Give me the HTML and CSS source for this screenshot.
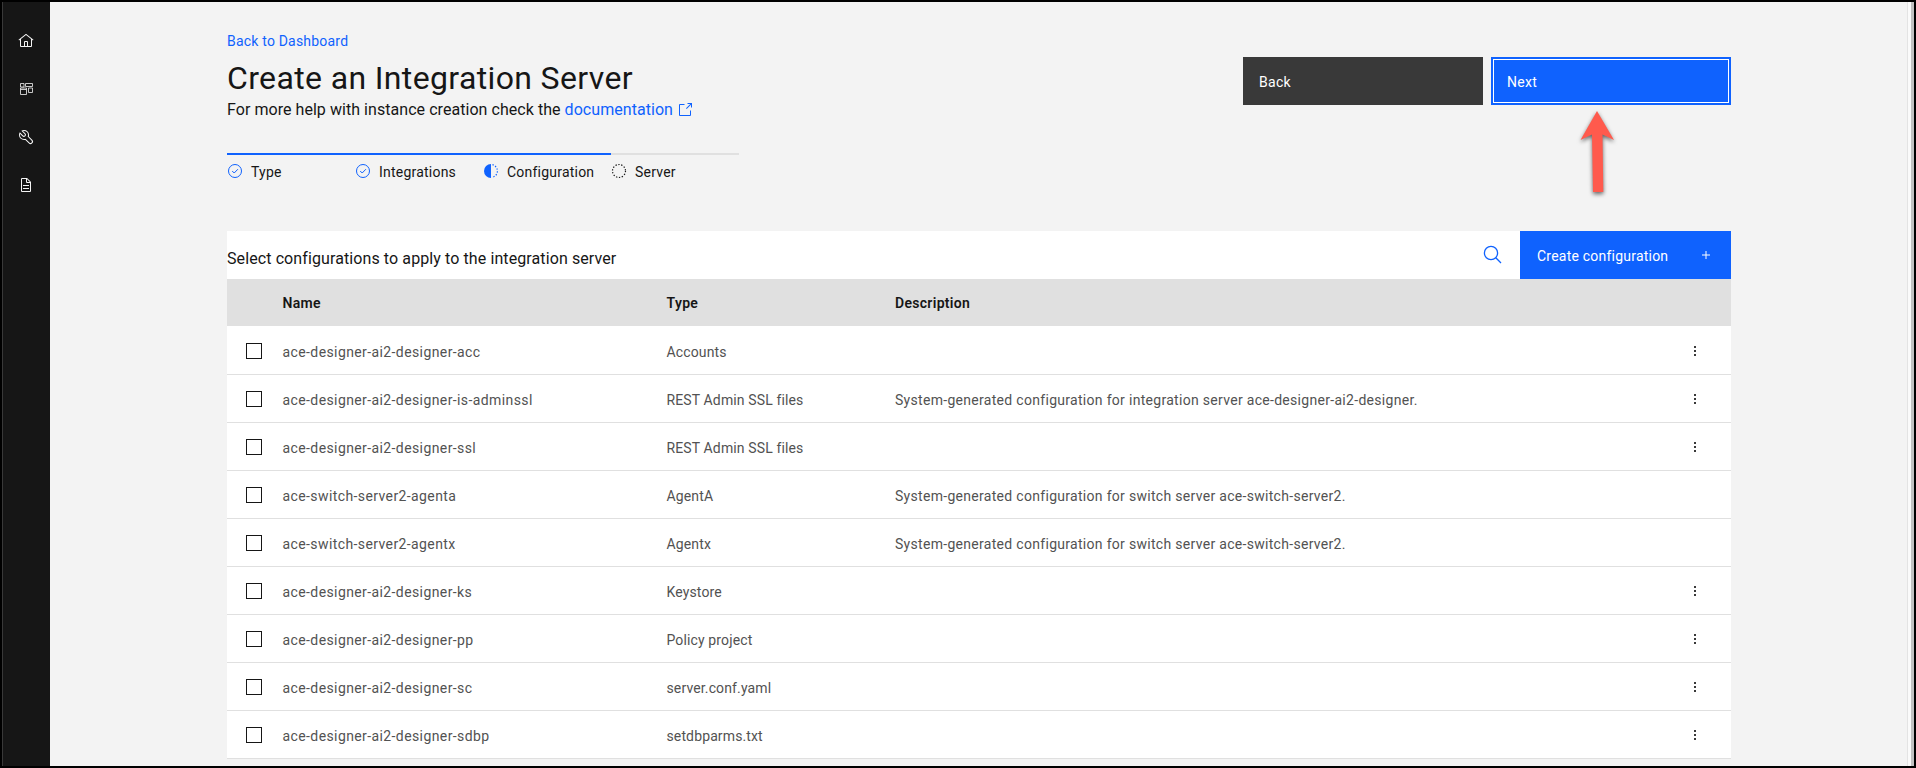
FILE: index.html
```
<!DOCTYPE html>
<html lang="en">
<head>
<meta charset="utf-8">
<title>Create an Integration Server</title>
<link rel="stylesheet" href="styles.css">
</head>
<body>
<div class="frame">
  <nav class="rail">
    <svg class="rail-icon" viewBox="0 0 32 32"><path d="M16.6 2.2a1 1 0 0 0-1.2 0L1 13.4 2.2 15 4 13.6V26a2 2 0 0 0 2 2h20a2 2 0 0 0 2-2V13.6l1.8 1.4 1.2-1.6ZM18 26h-4v-8h4Zm2 0v-8a2 2 0 0 0-2-2h-4a2 2 0 0 0-2 2v8H6V12l10-7.8L26 12v14Z"/></svg>
    <svg class="rail-icon" viewBox="0 0 32 32"><path class="line" d="M5 5h7v7H5zM15 5h14v6H15zM5 14h12v13H5zM21 14h8v9h-8zM5 17h12"/></svg>
    <svg class="rail-icon" viewBox="0 0 32 32"><path d="M12.100 2a9.800 9.800 0 0 0-5.400 1.600l6.400 6.400a2.100 2.100 0 0 1 .2 3 2.100 2.100 0 0 1-3-.2L3.700 6.400A9.840 9.840 0 0 0 2 12.100 10.140 10.140 0 0 0 12.100 22.200a10.900 10.900 0 0 0 2.600-.3l6.700 6.700a5 5 0 0 0 7.100-7.100l-6.700-6.700a10.900 10.900 0 0 0 .3-2.600A10 10 0 0 0 12.100 2ZM20 12.100a7.610 7.610 0 0 1-.3 2.100l-.3 1.100.8.8 6.700 6.700a2.880 2.880 0 0 1 .9 2.100A2.720 2.720 0 0 1 27 27a2.900 2.900 0 0 1-4.200 0l-6.700-6.700-.8-.8-1.100.3a7.610 7.610 0 0 1-2.100.3 8.270 8.270 0 0 1-5.700-2.300A7.630 7.630 0 0 1 4 12.100a8.330 8.330 0 0 1 .3-2.200l4.400 4.400a4.140 4.140 0 0 0 5.900.2 4.140 4.140 0 0 0-.2-5.900L10 4.200a6.450 6.450 0 0 1 2-.3 8.270 8.270 0 0 1 5.700 2.300A8.490 8.490 0 0 1 20 12.100Z"/></svg>
    <svg class="rail-icon" viewBox="0 0 32 32"><path d="M25.700 9.300l-7-7A1 1 0 0 0 18 2H8a2 2 0 0 0-2 2v24a2 2 0 0 0 2 2h16a2 2 0 0 0 2-2V10a1 1 0 0 0-.3-.7ZM18 4.400 23.600 10H18ZM24 28H8V4h8v6a2 2 0 0 0 2 2h6ZM10 22h12v2H10zM10 16h12v2H10z"/></svg>
  </nav>
  <main class="page">
    <header class="head">
      <div class="head-text">
        <a class="crumb">Back to Dashboard</a>
        <h1 class="title">Create an Integration Server</h1>
        <p class="help"><span>For more help with instance creation check the</span><a class="doc">documentation</a><svg class="launch" viewBox="0 0 32 32"><path d="M26 28H6a2 2 0 0 1-2-2V6a2 2 0 0 1 2-2h9v2H6v20h20v-9h2v9a2 2 0 0 1-2 2ZM21 2v2h5.600L18 12.600 19.400 14 28 5.400V11h2V2Z"/></svg></p>
      </div>
      <div class="actions">
        <button class="btn btn-back">Back</button>
        <button class="btn btn-next">Next</button>
        <svg class="pointer" viewBox="0 0 46 94"><path d="M22 5 39 34 27.500 28.500 28.300 86H18L17 28.500 5.500 34Z"/></svg>
      </div>
    </header>
    <ol class="steps">
      <li class="step done"><svg class="mark" viewBox="0 0 16 16"><circle cx="8" cy="8" r="6.500"/><path d="M5.200 8 7.200 10 10.900 6.200"/></svg><span>Type</span></li>
      <li class="step done"><svg class="mark" viewBox="0 0 16 16"><circle cx="8" cy="8" r="6.500"/><path d="M5.200 8 7.200 10 10.900 6.200"/></svg><span>Integrations</span></li>
      <li class="step done"><svg class="mark" viewBox="0 0 16 16"><path class="solid" d="M8 1a7 7 0 0 0 0 14Z"/><path class="dots" d="M9.500 1.700a6.500 6.500 0 0 1 0 12.600"/></svg><span>Configuration</span></li>
      <li class="step"><svg class="mark" viewBox="0 0 16 16"><circle class="dots" cx="8" cy="8" r="6.500"/></svg><span>Server</span></li>
    </ol>
    <section class="panel">
      <div class="toolbar">
        <p class="caption">Select configurations to apply to the integration server</p>
        <svg class="search" viewBox="0 0 20 20"><circle cx="8" cy="8" r="6.600"/><path d="m12.800 12.800 5.200 5.200"/></svg>
        <button class="create"><span>Create configuration</span><svg class="plus" viewBox="0 0 8 8"><path d="M4 0v8M0 4h8"/></svg></button>
      </div>
      <div class="row row-head"><span></span><span>Name</span><span>Type</span><span>Description</span><span></span></div>
      <div class="row"><i class="box"></i><span class="name">ace-designer-ai2-designer-acc</span><span class="type">Accounts</span><span></span><i class="kebab"></i></div>
      <div class="row"><i class="box"></i><span class="name">ace-designer-ai2-designer-is-adminssl</span><span class="type">REST Admin SSL files</span><span>System-generated configuration for integration server ace-designer-ai2-designer.</span><i class="kebab"></i></div>
      <div class="row"><i class="box"></i><span class="name">ace-designer-ai2-designer-ssl</span><span class="type">REST Admin SSL files</span><span></span><i class="kebab"></i></div>
      <div class="row"><i class="box"></i><span class="name">ace-switch-server2-agenta</span><span class="type">AgentA</span><span>System-generated configuration for switch server ace-switch-server2.</span></div>
      <div class="row"><i class="box"></i><span class="name">ace-switch-server2-agentx</span><span class="type">Agentx</span><span>System-generated configuration for switch server ace-switch-server2.</span></div>
      <div class="row"><i class="box"></i><span class="name">ace-designer-ai2-designer-ks</span><span class="type">Keystore</span><span></span><i class="kebab"></i></div>
      <div class="row"><i class="box"></i><span class="name">ace-designer-ai2-designer-pp</span><span class="type">Policy project</span><span></span><i class="kebab"></i></div>
      <div class="row"><i class="box"></i><span class="name">ace-designer-ai2-designer-sc</span><span class="type">server.conf.yaml</span><span></span><i class="kebab"></i></div>
      <div class="row"><i class="box"></i><span class="name">ace-designer-ai2-designer-sdbp</span><span class="type">setdbparms.txt</span><span></span><i class="kebab"></i></div>
    </section>
  </main>
  <div class="scroll"></div>
</div>
</body>
</html>
```
FILE: styles.css
```
* { box-sizing: border-box; }
body { margin: 0; font: 14px/18px Roboto, "Noto Sans", sans-serif; letter-spacing: 0.3px; color: #161616; }
h1, p, ol { margin: 0; padding: 0; font-weight: 400; }
button { border: 0; font: inherit; letter-spacing: inherit; text-align: left; color: #fff; }

.frame { display: flex; width: 1916px; height: 768px; border: 2px solid #000; background: #f3f3f3; overflow: hidden; }
.rail { width: 48px; flex: none; display: flex; flex-direction: column; gap: 32px; padding: 31px 0 0 15px; background: #161616; border-left: 1px solid #393939; }
.rail-icon { width: 16px; height: 16px; fill: #f4f4f4; }
.rail-icon .line { fill: none; stroke: #f4f4f4; stroke-width: 1.600; }
.page { flex: 1; padding: 0 176px 0 177px; }
.scroll { width: 7px; flex: none; background: #fafafa; border-left: 1px solid #e3e3e3; border-right: 3px solid #c1c1c1; }

.head { display: flex; justify-content: space-between; height: 151px; }
.head-text { padding-top: 30px; white-space: nowrap; }
.crumb { display: block; color: #0f62fe; letter-spacing: 0.2px; }
.title { margin-top: 8px; font-size: 32px; line-height: 40px; letter-spacing: 0.36px; }
.help { display: flex; align-items: center; gap: 4px; font-size: 16px; line-height: 22px; letter-spacing: 0.05px; margin-top: 1px; }
.doc { color: #0f62fe; }
.launch { width: 16px; height: 16px; fill: #0f62fe; }

.actions { display: flex; gap: 8px; padding-top: 55px; position: relative; }
.btn { width: 240px; height: 48px; padding: 2px 16px 0; }
.btn-back { background: #393939; }
.btn-next { background: #0f62fe; border: 2px solid #0f62fe; box-shadow: inset 0 0 0 1px #fff; padding-left: 14px; }
.pointer { position: absolute; left: 332px; top: 104px; width: 46px; height: 94px; fill: #ff5a4d; filter: drop-shadow(0 2px 2px rgba(0, 0, 0, 0.6)); }

.steps { display: flex; list-style: none; height: 78px; }
.step { width: 128px; height: 26px; display: flex; align-items: flex-start; gap: 8px; padding-top: 8px; border-top: 2px solid #e0e0e0; line-height: 19px; letter-spacing: 0.22px; }
.step.done { border-color: #0f62fe; }
.mark { width: 16px; height: 16px; fill: none; stroke: #161616; }
.done .mark { stroke: #0f62fe; }
.mark .solid { fill: #0f62fe; stroke: none; }
.mark .dots { stroke-width: 1.200; stroke-dasharray: 1.300 1.617; }

.toolbar { display: flex; height: 48px; background: #fff; }
.caption { flex: 1; font-size: 16px; line-height: 56px; letter-spacing: 0.1px; }
.search { width: 20px; height: 20px; margin: 14px 17px 0 0; fill: none; stroke: #0f62fe; stroke-width: 1.300; }
.create { width: 211px; display: flex; align-items: center; justify-content: space-between; padding: 2px 21px 0 17px; background: #0f62fe; letter-spacing: 0.22px; }
.plus { width: 8px; height: 8px; stroke: #fff; margin-top: -2px; }

.row { display: grid; grid-template-columns: 55.5px 384px 228.500px 1fr 38px; align-items: center; height: 48px; background: #fff; border-bottom: 1px solid #e0e0e0; color: #525252; white-space: nowrap; }
.row span { padding-top: 2px; }
.name { letter-spacing: 0.4px; }
.type { letter-spacing: 0.13px; }
.row-head { height: 47px; background: #e0e0e0; color: #161616; font-weight: 600; }
.row-head + .row { height: 49px; padding-top: 1px; }
.box { width: 16px; height: 16px; margin-left: 19px; border: 1px solid #161616; }
.kebab { width: 2px; height: 2px; margin-left: 1px; background: #393939; box-shadow: 0 -4px #393939, 0 4px #393939; }
```
